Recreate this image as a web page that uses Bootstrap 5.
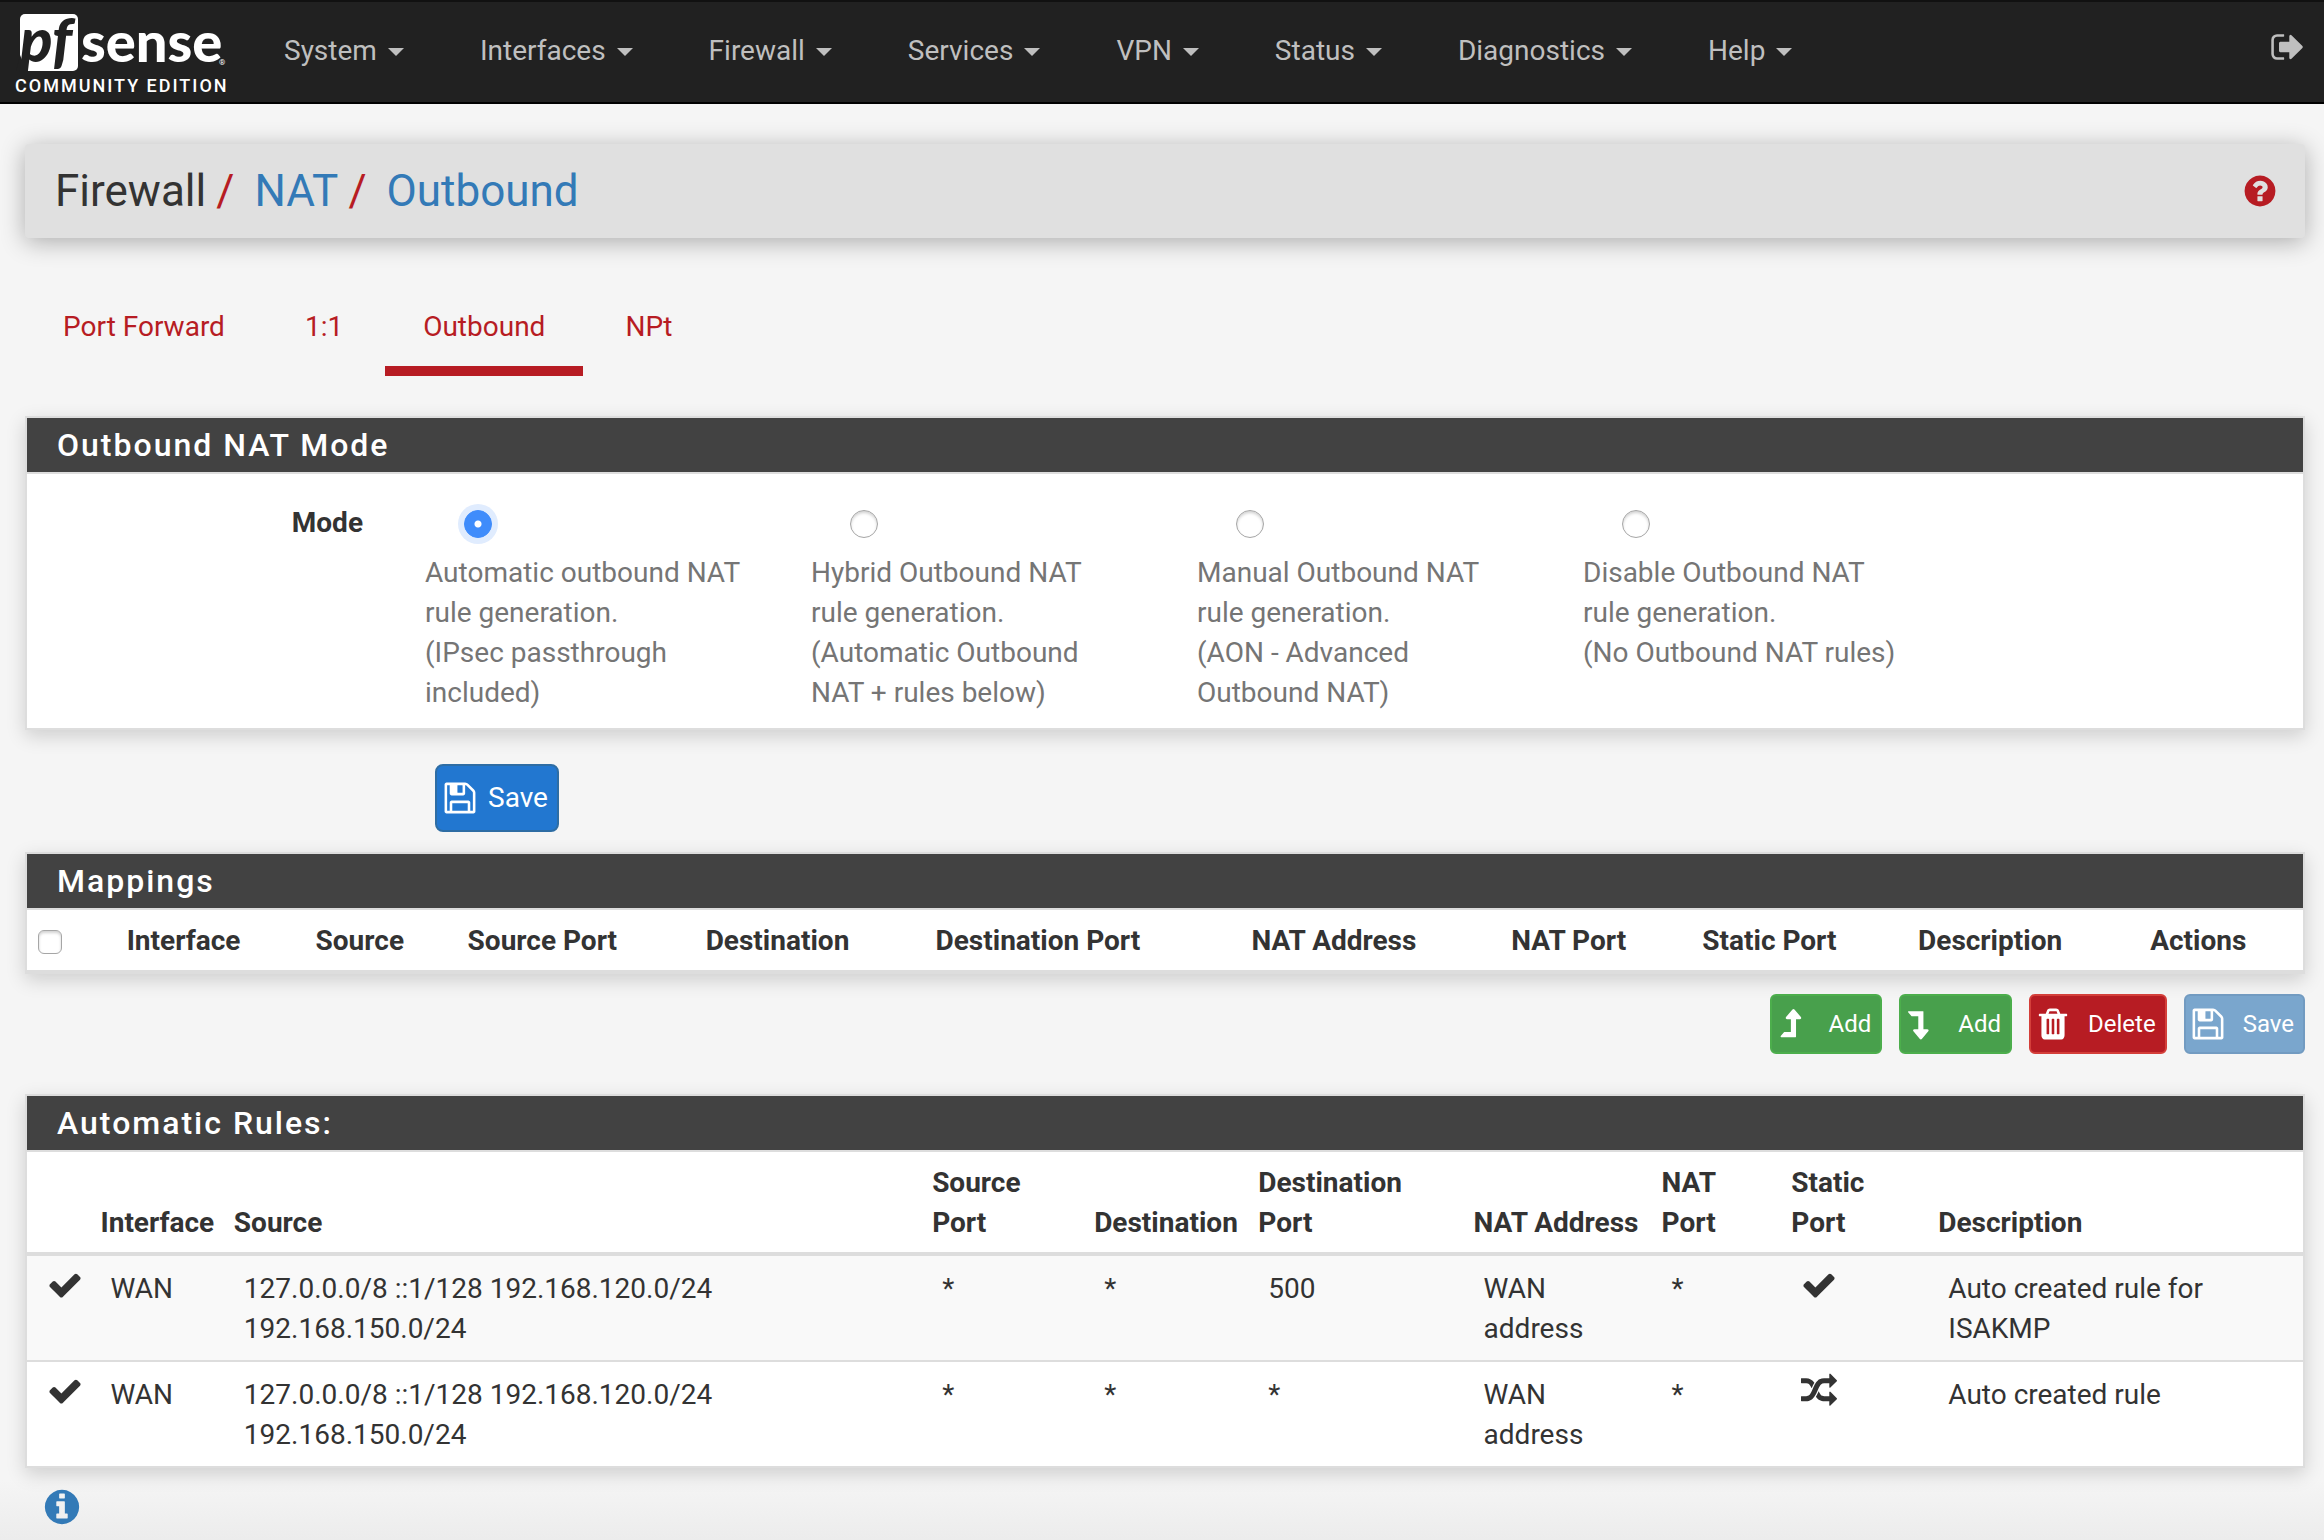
<!DOCTYPE html>
<html lang="en">
<head>
<meta charset="utf-8">
<meta name="viewport" content="width=device-width, initial-scale=1">
<title>Firewall: NAT: Outbound</title>
<link href="https://cdn.jsdelivr.net/npm/bootstrap@5.3.0/dist/css/bootstrap.min.css" rel="stylesheet">
<style>
  body { font-family: Roboto, "Liberation Sans", sans-serif; font-size: 28px; line-height: 40px; color: #333; background: #f5f5f5 linear-gradient(to top, #ececec, #f5f5f5 60px); }
  a { text-decoration: none; }
  .fa-svg { width: 36px; height: 36px; fill: currentColor; flex: none; display: block; }

  .topbar { background: #212121; border-top: 2px solid #111; border-bottom: 2px solid #000; padding: 0; min-height: 104px; }
  .brand-link svg { display: block; width: 246px; height: 100px; }
  .topbar .navbar-nav .nav-link { color: #bfbfbf; padding: 29px 38px 31px; display: flex; align-items: center; }
  .topbar .navbar-nav .nav-link:hover { color: #fff; }
  .topbar .dropdown-toggle::after { border-width: 8px 8px 0; margin: 2px 0 0 11px; }
  .logout-link { color: #bfbfbf; margin-right: 18px; padding-bottom: 10px; }

  .page-wrap { padding: 40px 19px 0 25px; }
  .crumb-bar { background: #e0e0e0; border-radius: 4px; padding: 17px 27px 17px 30px; box-shadow: 0 4px 24px rgba(0,0,0,.3); margin-bottom: 48px; }
  .crumb-bar .breadcrumb { font-size: 44px; line-height: 60px; --bs-breadcrumb-divider-color: #b71c23; --bs-breadcrumb-item-padding-x: 0; }
  .crumb-bar .breadcrumb-item + .breadcrumb-item::before { padding: 0 20px 0 10px; color: #b71c23; }
  .crumb-bar a { color: #337ab7; }
  .crumb-bar .help-link { color: #b71c23; }

  .section-tabs { gap: 4px; margin-bottom: 40px; }
  .section-tabs .nav-link { color: #b71c23; border-radius: 0; padding: 21px 38px 19px; border-bottom: 10px solid transparent; }
  .section-tabs .nav-link.active { color: #b71c23; background: none; border-color: #b71c23; }

  .pf-panel { border: 2px solid #ddd; background: #fff; box-shadow: 0 6px 18px rgba(0,0,0,.16); }
  .pf-panel > h2 { background: #424242; color: #fff; font-size: 32px; line-height: 54px; font-weight: 500; letter-spacing: 2px; margin: 0; padding: 0 30px; }
  .pf-panel > h2 + * { border-top: 2px solid #ddd; }
  .mode-body { padding: 29px 10px 15px 12px; }
  .mode-row { --bs-gutter-x: 62px; }
  .mode-choice { color: #757575; padding-right: 6px; }
  .mode-choice .form-check-input { display: block; float: none; width: 28px; height: 28px; margin: 7px 0 15px 39px; border: 1px solid #a6a6a6; box-shadow: inset 0 2px 3px rgba(0,0,0,.18); }
  .mode-choice .form-check-input:checked { background-color: #3f8cfb; border-color: #3f8cfb; background-image: radial-gradient(circle, #fff 3px, transparent 4px); background-size: 100% 100%; box-shadow: 0 0 0 6px #e0ecfe; }

  .save-row { padding: 34px 13px 20px; }
  .btn-main { background: #2277d0; border: 2px solid #2e6da4; border-radius: 8px; color: #fff; font-size: 28px; line-height: 40px; padding: 12px 9px 12px 5px; display: flex; align-items: center; gap: 10px; margin-left: 11px; }
  .btn-act { border: 2px solid; border-radius: 6px; color: #fff; font-size: 24px; line-height: 36px; padding: 10px 9px 10px 4px; display: flex; align-items: center; gap: 17px; }
  .btn-add { background: #48a04c; border-color: #4cae4c; }
  .btn-del { background: #b71c23; border-color: #d43f3a; }
  .btn-store, .btn-store:disabled { background: #7aa6cd; border-color: #729bc1; color: #fff; opacity: 1; }
  .act-row { gap: 17px; margin: 20px 0 40px; }

  .pf-table { table-layout: fixed; border-collapse: separate; border-spacing: 0; margin: 0; width: 100%; color: #333; }
  .pf-table th { padding: 11px 10px 9px; font-weight: 700; vertical-align: bottom; border-bottom: 4px solid #ddd; text-align: left; }
  .map-table th { border-bottom-width: 2px; white-space: nowrap; }
  .map-table th:first-child { padding-left: 11px; }
  .pf-table td { padding: 13px 10px 11px 20px; vertical-align: top; }
  .pf-table td .fa-svg { margin-top: -2px; }
  .pf-table tbody tr + tr td { border-top: 2px solid #ddd; }
  .pf-table tbody tr:nth-child(odd) td { background: #f9f9f9; }
  .pf-table .form-check-input { display: block; width: 24px; height: 24px; margin: 0 0 7px; border: 1px solid #a6a6a6; border-radius: 6px; box-shadow: inset 0 2px 3px rgba(0,0,0,.18); }
  .w-m1 { width: 3.94%; } .w-m2 { width: 8.3%; } .w-m3 { width: 6.68%; } .w-m4 { width: 10.46%; } .w-m5 { width: 10.1%; } .w-m6 { width: 13.88%; }
  .w-m7 { width: 11.42%; } .w-m8 { width: 8.39%; } .w-m9 { width: 9.48%; } .w-m10 { width: 10.2%; }
  .w-a1 { width: 2.79%; } .w-a2 { width: 5.86%; } .w-a3 { width: 30.68%; } .w-a4 { width: 7.12%; } .w-a5 { width: 7.21%; } .w-a6 { width: 9.46%; }
  .w-a7 { width: 8.26%; } .w-a8 { width: 5.7%; } .w-a9 { width: 6.46%; }
  .info-link { color: #337ab7; display: inline-block; margin: 19px 0 0 17px; }
  .info-link .fa-svg { width: 40px; height: 40px; }
</style>
<script src="https://cdn.jsdelivr.net/npm/bootstrap@5.3.0/dist/js/bootstrap.bundle.min.js"></script>
</head>
<body class="min-vh-100">

<svg class="d-none" xmlns="http://www.w3.org/2000/svg">
  <symbol id="i-check" viewBox="0 0 1792 1792"><path d="M1671 566q0 40-28 68l-724 724-136 136q-28 28-68 28t-68-28l-136-136-362-362q-28-28-28-68t28-68l136-136q28-28 68-28t68 28l294 295 656-657q28-28 68-28t68 28l136 136q28 28 28 68z"/></symbol>
  <symbol id="i-random" viewBox="0 0 1792 1792"><path d="M666 481q-60 92-137 273-22-45-37-72.5t-40.5-63.5-51-56.5-63-35-81.5-14.5h-224q-14 0-23-9t-9-23v-192q0-14 9-23t23-9h224q250 0 410 225zm1126 799q0 14-9 23l-320 320q-9 9-23 9-13 0-22.5-9.5t-9.5-22.5v-192q-32 0-85 .5t-81 1-73-1-71-5-64-10.5-63-18.5-58-28.5-59-40-55-53.5-56-69.5q59-93 136-273 22 45 37 72.5t40.5 63.5 51 56.5 63 35 81.5 14.5h256v-192q0-14 9-23t23-9q12 0 24 10l319 319q9 9 9 23zm0-896q0 14-9 23l-320 320q-9 9-23 9-13 0-22.5-9.5t-9.5-22.5v-192h-256q-48 0-87 15t-69 45-51 61.5-45 77.5q-32 62-78 171-29 66-49.5 111t-54 105-64 100-74 83-90 68.5-106.5 42-128 16.5h-224q-14 0-23-9t-9-23v-192q0-14 9-23t23-9h224q48 0 87-15t69-45 51-61.5 45-77.5q32-62 78-171 29-66 49.5-111t54-105 64-100 74-83 90-68.5 106.5-42 128-16.5h256v-192q0-14 9-23t23-9q12 0 24 10l319 319q9 9 9 23z"/></symbol>
  <symbol id="i-signout" viewBox="0 0 1792 1792"><path d="M704 1440q0 4 1 20t.5 26.5-3 23.5-10 19.5-20.5 6.5h-320q-119 0-203.5-84.5t-84.5-203.5v-704q0-119 84.5-203.5t203.5-84.5h320q13 0 22.5 9.5t9.5 22.5q0 4 1 20t.5 26.5-3 23.5-10 19.5-20.5 6.5h-320q-66 0-113 47t-47 113v704q0 66 47 113t113 47h312l11.5 1 11.5 3 8 5.5 7 9 2 13.5zm928-544q0 26-19 45l-544 544q-19 19-45 19t-45-19-19-45v-288h-448q-26 0-45-19t-19-45v-384q0-26 19-45t45-19h448v-288q0-26 19-45t45-19 45 19l544 544q19 19 19 45z"/></symbol>
  <symbol id="i-question" viewBox="0 0 1792 1792"><path d="M1024 1376v-192q0-14-9-23t-23-9h-192q-14 0-23 9t-9 23v192q0 14 9 23t23 9h192q14 0 23-9t9-23zm256-672q0-88-55.5-163t-138.5-116-170-41q-243 0-371 213-15 24 8 42l132 100q7 6 19 6 16 0 25-12 53-68 86-92 34-24 86-24 48 0 85.5 26t37.5 59q0 38-20 61t-68 45q-63 28-115.5 86.5t-52.5 125.5v36q0 14 9 23t23 9h192q14 0 23-9t9-23q0-19 21.5-49.5t54.5-49.5q32-18 49-28.5t46-35 44.5-48 28-60.5 12.5-81zm384 192q0 209-103 385.5t-279.5 279.5-385.5 103-385.5-103-279.5-279.5-103-385.5 103-385.5 279.5-279.5 385.5-103 385.5 103 279.5 279.5 103 385.5z"/></symbol>
  <symbol id="i-info" viewBox="0 0 1792 1792"><path d="M1152 1376v-160q0-14-9-23t-23-9h-96v-512q0-14-9-23t-23-9h-320q-14 0-23 9t-9 23v160q0 14 9 23t23 9h96v320h-96q-14 0-23 9t-9 23v160q0 14 9 23t23 9h448q14 0 23-9t9-23zm-128-896v-160q0-14-9-23t-23-9h-192q-14 0-23 9t-9 23v160q0 14 9 23t23 9h192q14 0 23-9t9-23zm640 416q0 209-103 385.5t-279.5 279.5-385.5 103-385.5-103-279.5-279.5-103-385.5 103-385.5 279.5-279.5 385.5-103 385.5 103 279.5 279.5 103 385.5z"/></symbol>
  <symbol id="i-floppy" viewBox="0 0 1792 1792"><path d="M512 1536h768v-384h-768v384zm896 0h128v-896q0-14-10-38.5t-20-34.5l-281-281q-10-10-34-20t-39-10v416q0 40-28 68t-68 28h-576q-40 0-68-28t-28-68v-416h-128v1280h128v-416q0-40 28-68t68-28h832q40 0 68 28t28 68v416zm-384-928v-320q0-13-9.5-22.5t-22.5-9.5h-192q-13 0-22.5 9.5t-9.5 22.5v320q0 13 9.5 22.5t22.5 9.5h192q13 0 22.5-9.5t9.5-22.5zm640 32v928q0 40-28 68t-68 28h-1344q-40 0-68-28t-28-68v-1344q0-40 28-68t68-28h928q40 0 88 20t76 48l280 280q28 28 48 76t20 88z"/></symbol>
  <symbol id="i-trash" viewBox="0 0 1792 1792"><path d="M704 1376v-704q0-14-9-23t-23-9h-64q-14 0-23 9t-9 23v704q0 14 9 23t23 9h64q14 0 23-9t9-23zm256 0v-704q0-14-9-23t-23-9h-64q-14 0-23 9t-9 23v704q0 14 9 23t23 9h64q14 0 23-9t9-23zm256 0v-704q0-14-9-23t-23-9h-64q-14 0-23 9t-9 23v704q0 14 9 23t23 9h64q14 0 23-9t9-23zm-544-992h448l-48-117q-7-9-17-11h-317q-10 2-17 11zm928 32v64q0 14-9 23t-23 9h-96v948q0 83-47 143.5t-113 60.5h-832q-66 0-113-58.5t-47-141.5v-952h-96q-14 0-23-9t-9-23v-64q0-14 9-23t23-9h309l70-167q15-37 54-63t79-26h320q40 0 79 26t54 63l70 167h309q14 0 23 9t9 23z"/></symbol>
  <symbol id="i-up" viewBox="155 0 1792 1792"><path d="M1402 621q-18 35-58 35h-192v864q0 14-9 23t-23 9h-704q-21 0-29-18-8-20 4-35l160-192q9-11 25-11h320v-640h-192q-40 0-58-35-17-37 9-68l320-384q18-22 49-22t49 22l320 384q27 32 9 68z"/></symbol>
  <symbol id="i-down" viewBox="331 0 1792 1792"><path d="M512 256h704q13 0 22.500 9.500t9.500 22.500v864h192q40 0 58 35.500t-9 68.500l-320 384q-18 22-49 22t-49-22l-320-384q-26-31-9-68 18-36 58-36h192v-640h-320q-14 0-25-11l-160-192q-13-14-4-34 9-19 29-19z"/></symbol>
</svg>

<nav class="navbar navbar-expand-lg topbar align-items-stretch">
  <a class="brand-link" href="#" aria-label="pfSense home">
    <svg viewBox="0 2 246 100">
      <rect x="20" y="14" width="58" height="57" rx="5" fill="#fff"/>
      <path d="M20 55L27 72H16Z" fill="#212121"/>
      <text x="20" y="62" font-family="Lato, sans-serif" font-weight="900" font-style="italic" font-size="60" fill="#212121">pf</text>
      <text x="81" y="62" font-family="Lato, sans-serif" font-weight="900" font-size="56" fill="#fff">sense</text>
      <text x="219" y="65" font-family="Roboto, sans-serif" font-size="8" fill="#fff">®</text>
      <text x="15" y="92" font-family="Roboto, sans-serif" font-weight="500" font-size="18" letter-spacing="2" fill="#fff">COMMUNITY EDITION</text>
    </svg>
  </a>
  <ul class="navbar-nav me-auto">
    <li class="nav-item dropdown"><a class="nav-link dropdown-toggle" href="#" data-bs-toggle="dropdown">System</a></li>
    <li class="nav-item dropdown"><a class="nav-link dropdown-toggle" href="#" data-bs-toggle="dropdown">Interfaces</a></li>
    <li class="nav-item dropdown"><a class="nav-link dropdown-toggle" href="#" data-bs-toggle="dropdown">Firewall</a></li>
    <li class="nav-item dropdown"><a class="nav-link dropdown-toggle" href="#" data-bs-toggle="dropdown">Services</a></li>
    <li class="nav-item dropdown"><a class="nav-link dropdown-toggle" href="#" data-bs-toggle="dropdown">VPN</a></li>
    <li class="nav-item dropdown"><a class="nav-link dropdown-toggle" href="#" data-bs-toggle="dropdown">Status</a></li>
    <li class="nav-item dropdown"><a class="nav-link dropdown-toggle" href="#" data-bs-toggle="dropdown">Diagnostics</a></li>
    <li class="nav-item dropdown"><a class="nav-link dropdown-toggle" href="#" data-bs-toggle="dropdown">Help</a></li>
  </ul>
  <a class="logout-link d-flex align-items-center" href="#" aria-label="Log out"><svg class="fa-svg"><use href="#i-signout"/></svg></a>
</nav>

<main class="page-wrap">
  <header class="crumb-bar d-flex align-items-center justify-content-between">
    <ol class="breadcrumb mb-0">
      <li class="breadcrumb-item">Firewall</li>
      <li class="breadcrumb-item"><a href="#">NAT</a></li>
      <li class="breadcrumb-item"><a href="#">Outbound</a></li>
    </ol>
    <a class="help-link" href="#" aria-label="Help"><svg class="fa-svg"><use href="#i-question"/></svg></a>
  </header>

  <ul class="nav nav-pills section-tabs">
    <li class="nav-item"><a class="nav-link" href="#">Port Forward</a></li>
    <li class="nav-item"><a class="nav-link" href="#">1:1</a></li>
    <li class="nav-item"><a class="nav-link active" href="#" aria-current="page">Outbound</a></li>
    <li class="nav-item"><a class="nav-link" href="#">NPt</a></li>
  </ul>

  <form>
    <section class="pf-panel">
      <h2>Outbound NAT Mode</h2>
      <div class="mode-body">
        <div class="row mode-row" role="radiogroup" aria-labelledby="mode-label">
          <div class="col-2 text-end fw-bold" id="mode-label">Mode</div>
          <div class="col-2"><label class="mode-choice"><input class="form-check-input" type="radio" name="mode" checked>Automatic outbound NAT rule generation.<br>(IPsec passthrough included)</label></div>
          <div class="col-2"><label class="mode-choice"><input class="form-check-input" type="radio" name="mode">Hybrid Outbound NAT rule generation.<br>(Automatic Outbound NAT + rules below)</label></div>
          <div class="col-2"><label class="mode-choice"><input class="form-check-input" type="radio" name="mode">Manual Outbound NAT rule generation.<br>(AON - Advanced Outbound NAT)</label></div>
          <div class="col-2"><label class="mode-choice"><input class="form-check-input" type="radio" name="mode">Disable Outbound NAT rule generation.<br>(No Outbound NAT rules)</label></div>
        </div>
      </div>
    </section>
    <div class="save-row">
      <div class="row mode-row">
        <div class="col-10 offset-2"><button type="button" class="btn btn-main"><svg class="fa-svg"><use href="#i-floppy"/></svg>Save</button></div>
      </div>
    </div>
  </form>

  <section class="pf-panel">
    <h2>Mappings</h2>
    <div>
      <table class="pf-table map-table">
        <colgroup><col class="w-m1"><col class="w-m2"><col class="w-m3"><col class="w-m4"><col class="w-m5"><col class="w-m6"><col class="w-m7"><col class="w-m8"><col class="w-m9"><col class="w-m10"><col></colgroup>
        <thead>
          <tr><th><input class="form-check-input" type="checkbox" aria-label="Select all"></th><th>Interface</th><th>Source</th><th>Source Port</th><th>Destination</th><th>Destination Port</th><th>NAT Address</th><th>NAT Port</th><th>Static Port</th><th>Description</th><th>Actions</th></tr>
        </thead>
      </table>
    </div>
  </section>

  <div class="act-row d-flex justify-content-end">
    <button type="button" class="btn btn-act btn-add"><svg class="fa-svg"><use href="#i-up"/></svg>Add</button>
    <button type="button" class="btn btn-act btn-add"><svg class="fa-svg"><use href="#i-down"/></svg>Add</button>
    <button type="button" class="btn btn-act btn-del"><svg class="fa-svg"><use href="#i-trash"/></svg>Delete</button>
    <button type="button" class="btn btn-act btn-store" disabled><svg class="fa-svg"><use href="#i-floppy"/></svg>Save</button>
  </div>

  <section class="pf-panel">
    <h2>Automatic Rules:</h2>
    <div>
      <table class="pf-table">
        <colgroup><col class="w-a1"><col class="w-a2"><col class="w-a3"><col class="w-a4"><col class="w-a5"><col class="w-a6"><col class="w-a7"><col class="w-a8"><col class="w-a9"><col></colgroup>
        <thead>
          <tr><th></th><th>Interface</th><th>Source</th><th>Source Port</th><th>Destination</th><th>Destination Port</th><th class="text-nowrap">NAT Address</th><th>NAT Port</th><th>Static Port</th><th>Description</th></tr>
        </thead>
        <tbody>
          <tr><td><svg class="fa-svg"><use href="#i-check"/></svg></td><td>WAN</td><td>127.0.0.0/8 ::1/128 192.168.120.0/24 192.168.150.0/24</td><td>*</td><td>*</td><td>500</td><td>WAN address</td><td>*</td><td><svg class="fa-svg"><use href="#i-check"/></svg></td><td>Auto created rule for ISAKMP</td></tr>
          <tr><td><svg class="fa-svg"><use href="#i-check"/></svg></td><td>WAN</td><td>127.0.0.0/8 ::1/128 192.168.120.0/24 192.168.150.0/24</td><td>*</td><td>*</td><td>*</td><td>WAN address</td><td>*</td><td><svg class="fa-svg"><use href="#i-random"/></svg></td><td>Auto created rule</td></tr>
        </tbody>
      </table>
    </div>
  </section>
  <a class="info-link" href="#" aria-label="Information"><svg class="fa-svg"><use href="#i-info"/></svg></a>
</main>
</body>
</html>
